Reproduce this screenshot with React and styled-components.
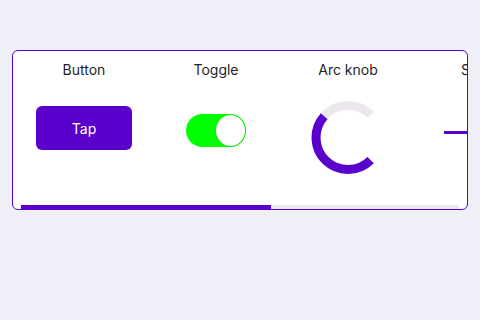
import React from "react";
import styled, { createGlobalStyle } from "styled-components";

const Global = createGlobalStyle`
  html, body {
    margin: 0;
    padding: 0;
    background: #efeff8;
    font-family: "Inter", "Noto Sans", sans-serif;
  }
`;

const Page = styled.div`
  width: 480px;
  height: 320px;
  padding: 50px 12px 0;
  box-sizing: border-box;
`;

const Card = styled.div`
  position: relative;
  height: 160px;
  background: #ffffff;
  border: 1px solid #5a00cc;
  border-radius: 6px;
  overflow: hidden;
  box-sizing: border-box;
`;

const Row = styled.div`
  display: flex;
  gap: 14px;
  padding: 0 12px 20px;
  overflow: hidden;
`;

const Column = styled.div`
  flex: 0 0 118px;
  display: flex;
  flex-direction: column;
  align-items: center;
`;

const Label = styled.div`
  margin-top: 10px;
  height: 18px;
  line-height: 18px;
  font-size: 14px;
  color: #1e1e2a;
  white-space: nowrap;
`;

const Control = styled.div`
  height: 80px;
  margin-top: 11px;
  display: flex;
  align-items: center;
  justify-content: center;
  transform: translateY(${(p) => p.$shift || 0}px);
`;

const TapButton = styled.button`
  width: 96px;
  height: 44px;
  border: none;
  border-radius: 6px;
  background: #5a00cc;
  color: #ffffff;
  font-family: inherit;
  font-size: 14px;
  font-weight: 400;
`;

const Switch = styled.div`
  position: relative;
  width: 60px;
  height: 33px;
  border-radius: 17px;
  background: #00ff00;
`;

const Knob = styled.div`
  position: absolute;
  top: 0;
  right: 0;
  width: 31px;
  height: 33px;
  border-radius: 50%;
  background: #ffffff;
  border: 1px solid #00ee00;
  box-sizing: border-box;
`;

const Slider = styled.div`
  width: 72px;
  height: 3px;
  background: #5a00cc;
`;

const Track = styled.div`
  position: absolute;
  left: 8px;
  right: 8px;
  bottom: 0;
  height: 4px;
  background: #ece8ee;
`;

const Thumb = styled.div`
  height: 100%;
  background: #5a00cc;
`;

const polar = (cx, cy, r, deg) => {
  const a = (deg * Math.PI) / 180;
  return [cx + r * Math.cos(a), cy + r * Math.sin(a)];
};

const arcPath = (cx, cy, r, from, to) => {
  const [x1, y1] = polar(cx, cy, r, from);
  const [x2, y2] = polar(cx, cy, r, to);
  const large = to - from > 180 ? 1 : 0;
  return `M ${x1} ${y1} A ${r} ${r} 0 ${large} 1 ${x2} ${y2}`;
};

const ArcKnob = ({ value }) => {
  const start = 45;
  const end = 315;
  const v = start + (end - start) * value;
  return (
    <svg width="76" height="76" viewBox="0 0 76 76">
      <path d={arcPath(38, 38, 32, start, end)} fill="none" stroke="#ece8ee" strokeWidth="9" />
      <path d={arcPath(38, 38, 32, start, v)} fill="none" stroke="#5a00cc" strokeWidth="9" />
    </svg>
  );
};

export default function App() {
  return (
    <>
      <Global />
      <Page>
        <Card>
          <Row>
            <Column>
              <Label>Button</Label>
              <Control $shift={-2}>
                <TapButton>Tap</TapButton>
              </Control>
            </Column>
            <Column>
              <Label>Toggle</Label>
              <Control>
                <Switch>
                  <Knob />
                </Switch>
              </Control>
            </Column>
            <Column>
              <Label>Arc knob</Label>
              <Control $shift={7.5}>
                <ArcKnob value={0.655} />
              </Control>
            </Column>
            <Column>
              <Label>Slider</Label>
              <Control $shift={2}>
                <Slider />
              </Control>
            </Column>
          </Row>
          <Track>
            <Thumb style={{ width: "57%" }} />
          </Track>
        </Card>
      </Page>
    </>
  );
}
